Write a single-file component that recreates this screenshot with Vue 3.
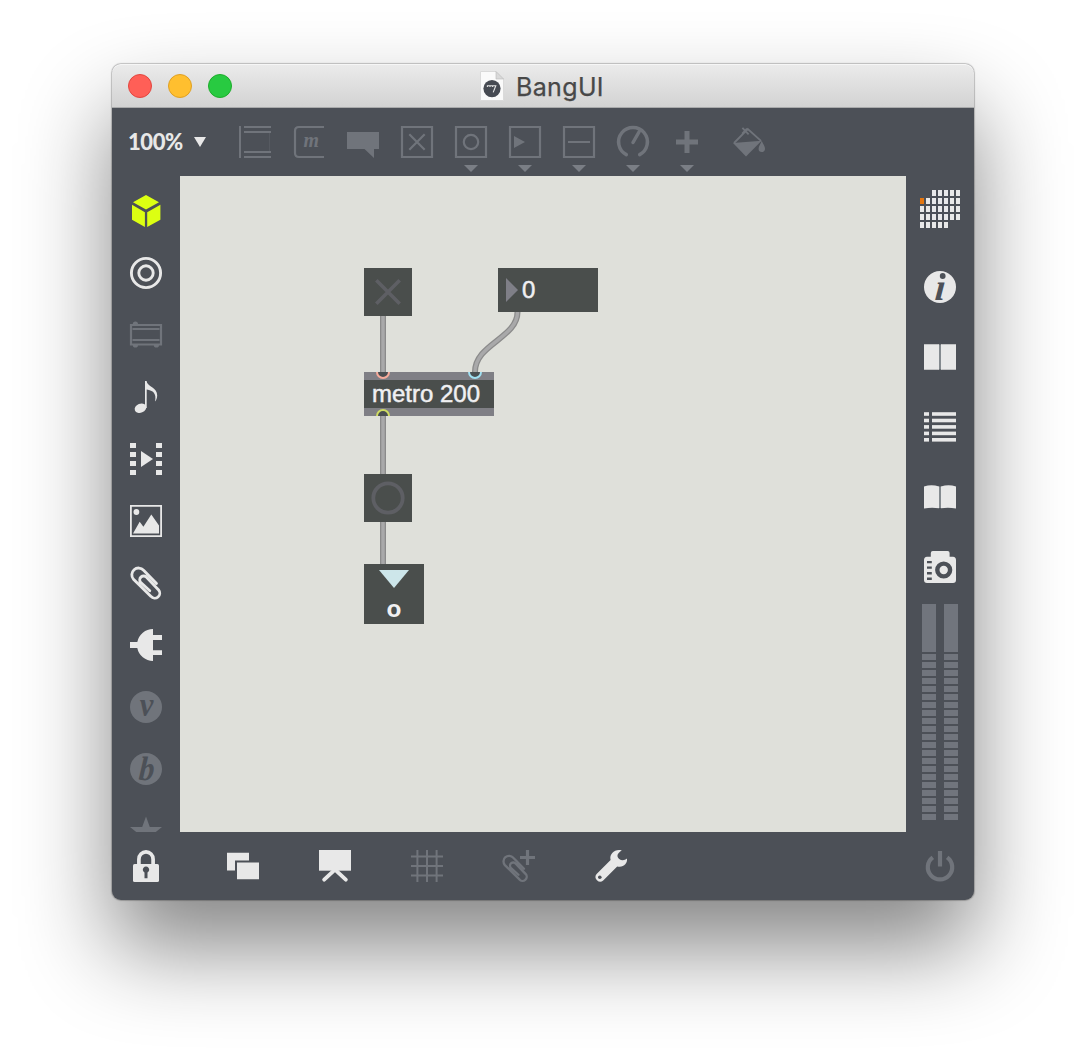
<script setup>
const leds = Array.from({ length: 21 }, (_, i) => i)
const keypad = [
  [2, 6],
  [0, 6],
  [0, 6],
  [0, 6],
  [0, 4],
].flatMap(([from, to], row) =>
  Array.from({ length: to - from + 1 }, (_, i) => ({
    x: (from + i) * 6,
    y: row * 8,
    hot: row === 1 && i === 0,
  }))
)
const filmHoles = [0, 9, 18, 27]
const listRows = [1.2, 7.7, 14.1, 20.6, 27]
const cords = [
  'M203 140V196',
  'M337.5 136C337.5 162 295 168 295 196',
  'M203 240V298',
  'M203 346V388',
]
</script>

<template>
  <div class="desktop">
    <div class="window">
      <header class="titlebar">
        <div class="lights">
          <i class="light close"></i>
          <i class="light minimize"></i>
          <i class="light maximize"></i>
        </div>
        <div class="title">
          <svg class="doc" width="24" height="30" viewBox="0 0 24 30">
            <path d="M.5 .5H16L23.5 8V29.5H.5z" fill="#fafafa" stroke="#dadada" />
            <path d="M16 .5V8H23.5z" fill="#d9d9d9" stroke="#bbb" stroke-width=".6" />
            <circle cx="12" cy="17.6" r="8.6" fill="#464a52" />
            <path d="M7.4 16V14.8H10V16M10 14.8H12.6V16M12.6 14.8H15.8L13.2 21.4" fill="none" stroke="#e6e6e6" stroke-width="1.1" />
          </svg>
          <span class="name">BangUI</span>
        </div>
      </header>

      <nav class="toolbar">
        <div class="zoom">
          <span class="pct">100%</span>
          <svg width="12" height="10" viewBox="0 0 12 10"><path d="M0 0H12L6 10z" fill="#e8e8e8" /></svg>
        </div>
        <div class="tools">
          <div class="tool">
            <svg class="ic" viewBox="0 0 32 32"><path d="M0 0H2V32H0zM5 0H32V2H5zM5 5H32V7H5zM5 25H32V27H5zM5 30H32V32H5z" fill="currentColor" /><path d="M30.5 7V25" stroke="currentColor" stroke-width=".3" /></svg>
          </div>
          <div class="tool">
            <svg class="ic" viewBox="0 0 32 32">
              <path class="line" d="M31 1H6Q2 1 2 5V27Q2 31 6 31H31" />
              <text class="glyph" x="18.3" y="21" font-size="22" textLength="15.5" lengthAdjust="spacingAndGlyphs" fill="currentColor">m</text>
            </svg>
          </div>
          <div class="tool">
            <svg class="ic" viewBox="0 0 32 32"><path d="M0 6H32V23H27V32L17.5 23H0z" fill="currentColor" /></svg>
          </div>
          <div class="tool">
            <svg class="ic" viewBox="0 0 32 32"><path class="line" d="M1 1H31V31H1zM8.3 8.3L23.7 23.7M23.7 8.3L8.3 23.7" /></svg>
          </div>
          <div class="tool more">
            <svg class="ic" viewBox="0 0 32 32"><path class="line" d="M1 1H31V31H1z" /><circle class="line" cx="16" cy="16" r="7.2" /></svg>
          </div>
          <div class="tool more">
            <svg class="ic" viewBox="0 0 32 32"><path class="line" d="M1 1H31V31H1z" /><path d="M5 10L16 16L5 22z" fill="currentColor" /></svg>
          </div>
          <div class="tool more">
            <svg class="ic" viewBox="0 0 32 32"><path class="line" d="M1 1H31V31H1zM5 16H27" /></svg>
          </div>
          <div class="tool more">
            <svg class="ic" viewBox="0 0 32 32"><path d="M9.3 28.6A14.4 14.4 0 1 1 22.7 28.6M16 16.5L22 6" fill="none" stroke="currentColor" stroke-width="3.5" stroke-linecap="round" /></svg>
          </div>
          <div class="tool more">
            <svg class="ic" viewBox="0 0 32 32"><path d="M5 16H27M16 5V27" stroke="currentColor" stroke-width="5" /></svg>
          </div>
          <div class="tool bucket">
            <svg class="ic" viewBox="0 0 32 32">
              <path d="M0 17L28.6 14.8L13 30.5z" fill="currentColor" />
              <path d="M1 17L14.8 3L28 14.8M9.4 1.8L15.6 8.4M9.2 7.6L14 2.6" fill="none" stroke="currentColor" stroke-width="1.8" />
              <path d="M28.7 14.8C30 18 32 20 32 22.8A3.2 3.2 0 0 1 25.6 22.8C25.6 20 27.6 18 28.7 14.8z" fill="currentColor" />
            </svg>
          </div>
        </div>
      </nav>

      <div class="middle">
        <aside class="left">
          <div class="cell lime">
            <svg class="ic" viewBox="0 0 32 32"><path d="M16 0L29 7.2L16 14.5L3 7.2zM2 9.8L14.9 17.2V32L2 24.8zM30.4 9.8L17.2 17.2V32L30.4 24.8z" fill="currentColor" /></svg>
          </div>
          <div class="cell">
            <svg class="ic" viewBox="0 0 32 32" fill="none" stroke="currentColor" stroke-width="2.9"><circle cx="16" cy="16" r="14.6" /><circle cx="16" cy="16" r="7.2" /></svg>
          </div>
          <div class="cell off">
            <svg class="ic" viewBox="0 0 32 32">
              <path class="line" d="M1 6H31V25.5H1zM2.5 10H29.5M2.5 21H29.5" />
              <path d="M2.8 5A2.6 2.6 0 0 1 8 5zM2.8 26A2.6 2.6 0 0 0 8 26zM23.8 26A2.6 2.6 0 0 0 29 26z" fill="currentColor" />
            </svg>
          </div>
          <div class="cell">
            <svg class="ic" viewBox="0 0 32 32" fill="currentColor">
              <ellipse cx="10.5" cy="27.2" rx="6" ry="4.5" transform="rotate(-22 10.5 27.2)" />
              <path d="M15 0H16.6C17 6 27.4 6 27.2 14.5C27.2 17 26.2 19.5 25 20.5C26.8 12.5 23 9.6 16.7 8.6V27H15z" />
            </svg>
          </div>
          <div class="cell">
            <svg class="ic" viewBox="0 0 32 32" fill="currentColor">
              <template v-for="y in filmHoles" :key="y">
                <rect x="0" :y="y" width="6" height="5" />
                <rect x="26" :y="y" width="6" height="5" />
              </template>
              <path d="M11 8L23 16L11 24z" />
            </svg>
          </div>
          <div class="cell">
            <svg class="ic" viewBox="0 0 32 32">
              <path class="line thin" d="M.9 .9H31.1V31.1H.9z" />
              <circle cx="6.4" cy="7" r="2.9" fill="currentColor" />
              <path d="M3 28.6L9.7 16.7L13.4 21.7L21.3 9.5L29 20.6V28.6z" fill="currentColor" />
            </svg>
          </div>
          <div class="cell">
            <svg class="ic" viewBox="0 0 32 32"><path class="clip" d="M26.5 16.5L13.6 3.3A6.4 6.4 0 0 0 3.5 12.2L21 29.4A4.9 4.9 0 0 0 28.6 23L16.6 10.4A3.8 3.8 0 0 0 10.6 15.4L19.8 23.8" /></svg>
          </div>
          <div class="cell">
            <svg class="ic" viewBox="0 0 32 32"><path d="M23 0V6H32V11H23V21.3H32V26H23V32A16 16 0 0 1 7.3 19H0V13H7.3A16 16 0 0 1 23 0z" fill="currentColor" /></svg>
          </div>
          <div class="cell off">
            <svg class="ic" viewBox="0 0 32 32"><circle cx="16" cy="16" r="16" fill="currentColor" /><text class="glyph" x="16.6" y="25" font-size="34" textLength="13.6" lengthAdjust="spacingAndGlyphs" fill="#4c5057">v</text></svg>
          </div>
          <div class="cell off">
            <svg class="ic" viewBox="0 0 32 32"><circle cx="16" cy="16" r="16" fill="currentColor" /><text class="glyph" transform="translate(16 26.6) skewX(-4)" font-size="34" textLength="15.6" lengthAdjust="spacingAndGlyphs" fill="#4c5057">b</text></svg>
          </div>
          <div class="cell off">
            <svg class="ic" viewBox="0 0 32 32"><path d="M16 1.5L19.8 12H32L22 20L26 32L16 24.5L6 32L10 20L0 12H12.2z" fill="currentColor" /></svg>
          </div>
        </aside>

        <main class="patcher">
          <svg class="cords" width="726" height="656" viewBox="0 0 726 656" fill="none">
            <g v-for="d in cords" :key="d">
              <path :d="d" stroke="#8b8b8b" stroke-width="6" />
              <path :d="d" stroke="#a9a9aa" stroke-width="3.4" />
            </g>
          </svg>
          <div class="box toggle">
            <svg width="48" height="48" viewBox="0 0 48 48"><path d="M12.3 12.3L35.7 35.7M35.7 12.3L12.3 35.7" stroke="#5e5f64" stroke-width="3.6" /></svg>
          </div>
          <div class="box number">
            <svg width="12" height="24" viewBox="0 0 12 24"><path d="M0 0L12 12L0 24z" fill="#7f7f87" /></svg>
            <span>0</span>
          </div>
          <div class="box metro">
            <span>metro 200</span>
            <svg class="ports" width="130" height="44" viewBox="0 0 130 44" fill="#4a4f52" stroke-width="2">
              <path d="M13 0A6 6 0 0 0 25 0" stroke="#f7ab9b" />
              <path d="M105 0A6 6 0 0 0 117 0" stroke="#a0e0f2" />
              <path d="M13 44A6 6 0 0 1 25 44" stroke="#cfdc62" />
            </svg>
          </div>
          <div class="box bang">
            <svg width="48" height="48" viewBox="0 0 48 48"><circle cx="24" cy="24" r="14.7" fill="none" stroke="#5e5f64" stroke-width="3.8" /></svg>
          </div>
          <div class="box outlet">
            <svg width="30" height="18" viewBox="0 0 30 18"><path d="M0 0H30L15 18z" fill="#cde6ea" /></svg>
            <span>o</span>
          </div>
        </main>

        <aside class="right">
          <svg class="keypad" width="40" height="38" viewBox="0 0 40 38">
            <rect v-for="(k, i) in keypad" :key="i" :x="k.x" :y="k.y" width="4" height="6" :fill="k.hot ? '#e4760f' : '#e9e9e9'" />
          </svg>
          <div class="slot">
            <svg class="ic" viewBox="0 0 32 32">
              <circle cx="16" cy="16" r="16" fill="currentColor" />
              <circle cx="18.7" cy="5" r="2.9" fill="#4c5057" />
              <text class="glyph" transform="translate(15.4 28.6) skewX(-5)" font-size="38" textLength="10.4" lengthAdjust="spacingAndGlyphs" fill="#4c5057">ı</text>
            </svg>
          </div>
          <div class="slot">
            <svg class="ic" viewBox="0 0 32 32"><path d="M14 3.5H18V28.5H14z" fill="#848a8f" /><path d="M0 3.3H15V28.7H0zM17 3.3H32V28.7H17z" fill="currentColor" /></svg>
          </div>
          <div class="slot">
            <svg class="ic" viewBox="0 0 32 32" fill="currentColor">
              <template v-for="y in listRows" :key="y">
                <rect x="0" :y="y" width="5" height="3.6" />
                <rect x="8" :y="y" width="24" height="3.6" />
              </template>
            </svg>
          </div>
          <div class="slot">
            <svg class="ic" viewBox="0 0 32 32"><path d="M14 5.5H18V27H14z" fill="#848a8f" /><path d="M0 5.4Q7.5 3 15 5.4V27.2Q7.5 26.2 0 27.4zM17 5.4Q24.5 3 32 5.4V27.4Q24.5 26.2 17 27.2z" fill="currentColor" /></svg>
          </div>
          <div class="slot">
            <svg class="ic" viewBox="0 0 32 32">
              <path d="M3 5.8H6.8V2Q6.8 0 8.8 0H23.6Q25.6 0 25.6 2V5.8H29Q32 6 32 9V29Q32 32 29 32H3Q0 32 0 29V9Q0 6 3 5.8z" fill="currentColor" />
              <path d="M3 9.9H7.8V12.3H3zM3 15.4H7.8V17.8H3zM3 21H7.8V23.4H3zM3 26.6H7.8V29H3z" fill="#4c5057" />
              <circle cx="19.7" cy="19" r="6.4" fill="none" stroke="#4c5057" stroke-width="4.4" />
            </svg>
          </div>
          <div class="meters">
            <div v-for="m in 2" :key="m" class="meter">
              <i class="peak"></i>
              <i v-for="l in leds" :key="l" class="led"></i>
            </div>
          </div>
        </aside>
      </div>

      <footer class="bottom">
        <svg class="ic lock" viewBox="0 0 32 32">
          <rect x="3" y="14" width="26" height="18" rx="1.6" fill="currentColor" />
          <path d="M8.9 15V9.2A7.1 7.3 0 0 1 23.1 9.2V15" fill="none" stroke="currentColor" stroke-width="3.7" />
          <path d="M14.5 22.5A3.2 3.2 0 1 1 17.5 22.5V28.3H14.5z" fill="#4c5057" />
        </svg>
        <div class="actions">
          <svg class="ic" viewBox="0 0 32 32"><path d="M0 2.7H22V10.4H8V20.6H0zM10 12.6H32V29.3H10z" fill="currentColor" /></svg>
          <svg class="ic" viewBox="0 0 32 32"><path d="M0 0H32V20.7H0z" fill="currentColor" /><path d="M5.2 29.6L16 19.6L26.8 29.6" fill="none" stroke="currentColor" stroke-width="3.9" stroke-linecap="round" /></svg>
          <svg class="ic off" viewBox="0 0 32 32"><path d="M6.4 0V32M16 0V32M25.6 0V32M0 6.6H32M0 16H32M0 25.6H32" stroke="currentColor" stroke-width="2" /></svg>
          <svg class="ic off" viewBox="0 0 32 32">
            <path class="clip" transform="translate(-1 5) scale(.83)" d="M26.5 16.5L13.6 3.3A6.4 6.4 0 0 0 3.5 12.2L21 29.4A4.9 4.9 0 0 0 28.6 23L16.6 10.4A3.8 3.8 0 0 0 10.6 15.4L19.8 23.8" />
            <path d="M17 7.5H32M24.5 0V15" stroke="currentColor" stroke-width="3.2" />
          </svg>
          <svg class="ic" viewBox="0 0 32 32">
            <path d="M26.8 .5C20.5 -1.5 14 3.5 15.6 10L1.6 24A4.7 4.7 0 0 0 8.2 30.6L22.2 16.4C28.3 17.8 32.6 14 32 8.6C29.5 10.8 26.4 10.8 24.2 9C21.3 6.6 22 3.2 26.8 .5z" fill="currentColor" />
            <circle cx="4.8" cy="27.3" r="1.8" fill="#4c5057" />
          </svg>
        </div>
        <svg class="ic off" viewBox="0 0 32 32"><path d="M8.8 7.4A12.2 12.2 0 1 0 23.2 7.4M16 1V16.6" fill="none" stroke="currentColor" stroke-width="4.2" /></svg>
      </footer>
    </div>
  </div>
</template>

<style>
body {
  margin: 0;
  background: #fff;
}
</style>

<style scoped>
.desktop {
  box-sizing: border-box;
  width: 1086px;
  height: 1060px;
  padding: 64px 112px;
  overflow: hidden;
  background: #fff;
}
.window {
  width: 862px;
  height: 836px;
  display: flex;
  flex-direction: column;
  border-radius: 9px;
  background: #4c5057;
  box-shadow: 0 0 1px 1px rgba(0, 0, 0, 0.22), 0 48px 90px rgba(0, 0, 0, 0.48);
  color: #e8e8e8;
}
.titlebar {
  box-sizing: border-box;
  flex: none;
  height: 44px;
  display: flex;
  align-items: center;
  padding-left: 16px;
  border-radius: 9px 9px 0 0;
  background: linear-gradient(#ebebeb, #d2d2d2);
  box-shadow: inset 0 1px #f6f6f6, inset 0 -1px #a9aaab;
}
.lights {
  display: flex;
  gap: 16px;
  width: 352px;
}
.light {
  box-sizing: border-box;
  width: 24px;
  height: 24px;
  border-radius: 50%;
  border: 1px solid;
}
.close { background: #ff5f57; border-color: #e2463f; }
.minimize { background: #ffbf2f; border-color: #dfa023; }
.maximize { background: #28ca41; border-color: #1dad2b; }
.title {
  display: flex;
  align-items: center;
  gap: 12px;
}
.name {
  color: #484848;
  padding-top: 2px;
  font: 25px/30px Inter, sans-serif;
  letter-spacing: 0.35px;
  -webkit-text-stroke: 0.25px;
}
.toolbar {
  flex: none;
  height: 68px;
  display: flex;
  align-items: center;
}
.zoom {
  display: flex;
  align-items: center;
  width: 100px;
  padding-left: 16px;
}
.pct {
  width: 66px;
  font: 900 22px/26px Lato, sans-serif;
  letter-spacing: -0.4px;
}
.tools {
  display: flex;
  color: #70747b;
}
.tool {
  position: relative;
  display: flex;
  justify-content: center;
  width: 54px;
}
.more::after {
  content: "";
  position: absolute;
  top: 39px;
  left: 20px;
  border: 7px solid transparent;
  border-top-color: #7a7e85;
  border-bottom: 0;
}
.bucket { margin-left: 8px; }
.ic {
  display: block;
  width: 32px;
  height: 32px;
  overflow: visible;
}
.line {
  fill: none;
  stroke: currentColor;
  stroke-width: 2.2;
}
.thin { stroke-width: 1.8; }
.clip {
  fill: none;
  stroke: currentColor;
  stroke-width: 2.8;
  stroke-linecap: round;
}
.glyph {
  font-family: "Liberation Serif", serif;
  font-weight: 700;
  font-style: italic;
  text-anchor: middle;
}
.middle {
  flex: none;
  height: 656px;
  display: flex;
}
.left {
  box-sizing: border-box;
  width: 68px;
  padding-top: 4px;
  overflow: hidden;
}
.cell {
  height: 62px;
  display: flex;
  align-items: center;
  justify-content: center;
}
.off { color: #70747b; }
.lime { color: #dcff12; }
.patcher {
  position: relative;
  width: 726px;
  background: #dfe0da;
  font: 24px/28px "Liberation Sans", sans-serif;
  color: #f0f0f2;
}
.cords { display: block; }
.box {
  position: absolute;
  box-sizing: border-box;
  background: #4a4e4c;
}
.box svg { display: block; }
.toggle { left: 184px; top: 92px; width: 48px; height: 48px; }
.number {
  left: 318px;
  top: 92px;
  width: 100px;
  height: 44px;
  display: flex;
  align-items: center;
  gap: 4px;
  padding-left: 8px;
}
.number span { -webkit-text-stroke: 0.5px; }
.metro {
  left: 184px;
  top: 196px;
  width: 130px;
  height: 44px;
  padding-left: 8px;
  border: solid #7f7f85;
  border-width: 8px 0;
  white-space: nowrap;
}
.metro span {
  display: block;
  -webkit-text-stroke: 0.5px;
}
.ports {
  position: absolute;
  left: 0;
  top: -8px;
}
.bang { left: 184px; top: 298px; width: 48px; height: 48px; }
.outlet {
  left: 184px;
  top: 388px;
  width: 60px;
  height: 60px;
  padding-top: 6px;
  display: flex;
  flex-direction: column;
  align-items: center;
  font: 900 25px/28px Lato, sans-serif;
}
.outlet span { margin-top: 5px; }
.right {
  width: 68px;
  display: flex;
  flex-direction: column;
  align-items: center;
}
.keypad { margin: 14px 0 24px; }
.slot {
  height: 70px;
  display: flex;
  align-items: center;
}
.meters {
  display: flex;
  gap: 8px;
  margin-top: 2px;
}
.meter {
  display: flex;
  flex-direction: column;
  gap: 2px;
  width: 14px;
}
.peak, .led {
  height: 6px;
  background: #71757d;
}
.peak { height: 48px; }
.bottom {
  flex: none;
  height: 68px;
  display: flex;
  align-items: center;
  padding: 0 18px;
}
.actions {
  display: flex;
  gap: 60px;
  margin: 0 auto 0 65px;
}
</style>
